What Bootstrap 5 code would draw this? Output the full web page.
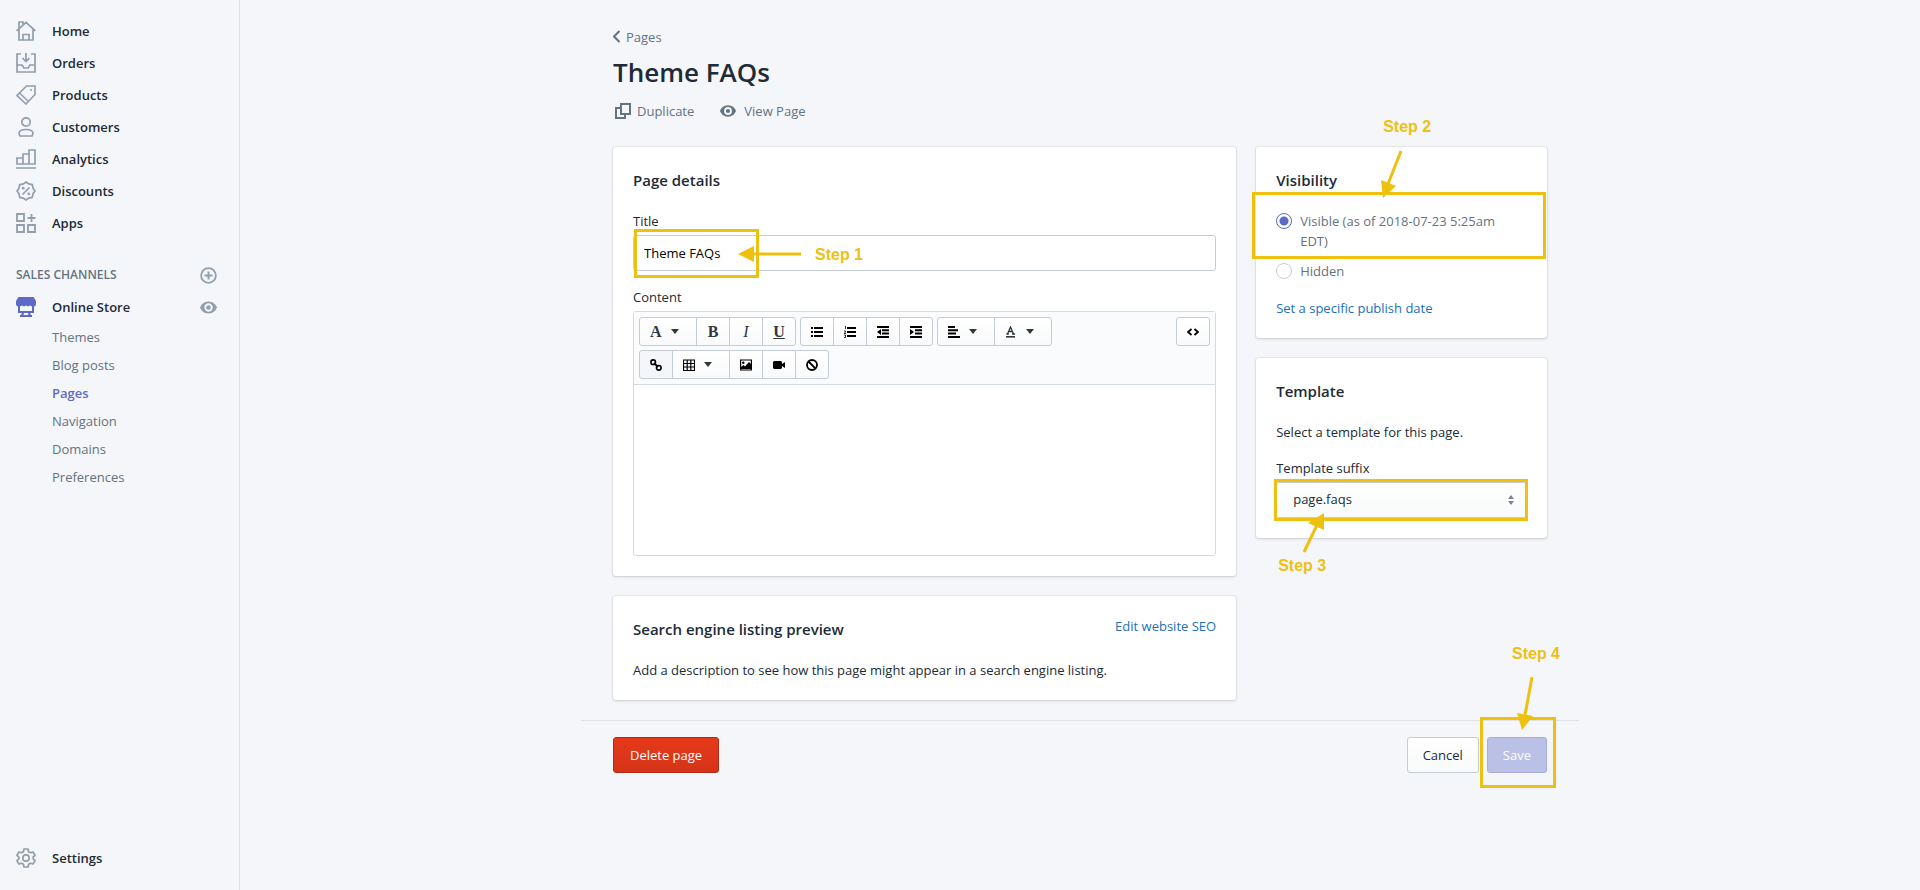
<!DOCTYPE html>
<html lang="en">
<head>
<meta charset="utf-8">
<meta name="viewport" content="width=device-width, initial-scale=1">
<title>Theme FAQs</title>
<link href="https://cdn.jsdelivr.net/npm/bootstrap@5.3.0/dist/css/bootstrap.min.css" rel="stylesheet">
<style>
  :root { --ink:#212b36; --subdued:#637381; --icon:#919eab; --indigo:#5c6ac4; --rule:#dfe3e8; --field:#c4cdd5; --gold:#eec00f; }
  body { background:#f4f6fa; color:var(--ink); font-family:"Open Sans","Noto Sans",sans-serif; font-size:13px; line-height:20px; }
  a { color:#1b70b8; text-decoration:none; }
  svg { fill:none; stroke:currentColor; display:block; flex:none; }
  .fill-icon { fill:currentColor; stroke:none; }

  .sidebar { width:240px; border-right:1px solid var(--rule); padding:15px 0 16px; }
  .sidebar .nav-link { display:flex; align-items:center; gap:16px; height:32px; padding:0 16px; color:var(--ink); font-weight:600; }
  .sidebar .nav-link svg { color:var(--icon); stroke-width:2; }
  .sidebar .nav-link .store { color:var(--indigo); }
  .channels { height:32px; padding:0 22px 0 16px; margin-top:20px; color:var(--subdued); font-size:12px; font-weight:600; }
  .plain-btn { background:none; border:0; padding:0; color:var(--icon); }
  .store-row { padding-right:22px; }
  .sidebar .sub-nav .nav-link { height:28px; padding-left:52px; color:var(--subdued); font-weight:400; }
  .sidebar .sub-nav .active { color:var(--indigo); font-weight:600; }

  .page { max-width:998px; padding:27px 0 0; }
  .page-body, .page-actions { padding-left:32px; padding-right:32px; }
  .crumb, .action-link { color:var(--subdued); }
  h1 { font-size:26px; line-height:32px; font-weight:600; margin:7px 0 0; }
  .title-actions { margin:13px 0 26px; gap:26px; }
  .columns { display:grid; grid-template-columns:minmax(0,15fr) minmax(0,7fr); gap:20px; }
  .stack { display:flex; flex-direction:column; gap:20px; }
  .panel { background:#fff; border-radius:3px; padding:20px; box-shadow:0 0 0 1px rgba(63,63,68,.06),0 1px 3px rgba(63,63,68,.18); }
  h2 { font-size:15px; line-height:24px; font-weight:600; margin:1px 0 -1px; }
  .form-label { margin:0; line-height:20px; }
  .form-control { height:36px; padding:0 10px; border-color:var(--field); border-radius:3px; font-size:13px; color:#000; }

  .editor { border:1px solid #d3dbe2; border-radius:3px; }
  .tools { background:#fafbfc; border-bottom:1px solid #d3dbe2; padding:5px; row-gap:4px; column-gap:4px; }
  .tools .btn { width:34px; height:29px; padding:0; display:flex; align-items:center; justify-content:center; flex:none; border:1px solid var(--field); border-radius:3px; background:linear-gradient(#fff,#f9fafb); color:#000; }
  .tools .btn.wide { width:58px; gap:9px; padding-left:10px; justify-content:flex-start; color:#31373d; }
  .tools .btn.pressed { background:#f4f6fa; }
  .glyph { font:700 16px/20px "Liberation Serif",serif; color:#31373d; }
  .canvas { display:block; width:100%; height:170px; border:0; resize:none; border-radius:3px; padding:10px; }

  .form-check { min-height:20px; padding-left:24px; margin:0; color:var(--subdued); }
  .form-check .form-check-input { width:16px; height:16px; margin:2px 0 0 -24px; border-color:var(--field); background-color:#fff; }
  .form-check .form-check-input:checked { border-color:var(--indigo); background-image:radial-gradient(circle,var(--indigo) 4px,transparent 5px); }
  .choice-next { margin-top:10px; }
  .publish { margin:17px 0 0; }
  .suffix { height:36px; padding:0 16px; border:1px solid var(--field); border-radius:3px; font-size:13px; color:var(--ink);
    background:url("data:image/svg+xml,%3Csvg xmlns='http://www.w3.org/2000/svg' viewBox='0 0 6 10'%3E%3Cpath fill='%23798490' d='M0 4l3-4 3 4zM0 6h6l-3 4z'/%3E%3C/svg%3E") no-repeat right 12px center/6px 10px, linear-gradient(#fff,#f9fafb); }

  .page-actions { border-top:1px solid var(--rule); margin-top:20px; padding-top:16px; }
  .page-actions .btn { height:36px; padding:0 15px; border-radius:3px; font-size:13px; line-height:20px; }
  .page-actions .btn-delete { color:#fff; background:linear-gradient(#e6391a,#d53418); border-color:#b02a12; padding:0 16px; }
  .btn-cancel { color:var(--ink); background:linear-gradient(#fff,#f9fafb); border-color:var(--field); }
  .page-actions .btn-save { color:#fff; background:#bac0e6; border-color:#a7aedc; opacity:1; }

  /* tutorial callouts laid over the form */
  .callout-box { position:absolute; border:3px solid var(--gold); pointer-events:none; z-index:2; }
  .callout-text { position:absolute; color:var(--gold); font:700 16px/20px "Liberation Sans",sans-serif; white-space:nowrap; z-index:3; }
  .callout-arrow { position:absolute; color:var(--gold); stroke-width:3; z-index:3; overflow:visible; }
  .callout-arrow polygon { fill:currentColor; stroke:none; }
  .step1 .callout-box { left:1px; top:-6px; width:125px; height:49px; }
  .step1 .callout-arrow { left:105px; top:11px; }
  .step1 .callout-text { left:182px; top:10px; }
  .step2 .callout-box { left:-24px; right:-19px; top:-15px; height:67px; }
  .step2 .callout-arrow { left:106px; top:-56px; }
  .step2 .callout-text { left:107px; top:-90px; }
  .step3 .callout-box { left:-2px; right:-1px; top:-3px; bottom:-3px; }
  .step3 .callout-arrow { left:24px; top:31px; }
  .step3 .callout-text { left:2px; top:74px; }
  .step4 .callout-box { left:-7px; right:-9px; top:-20px; bottom:-15px; }
  .step4 .callout-arrow { right:14px; top:-60px; }
  .step4 .callout-text { right:-13px; top:-93px; }
</style>
</head>
<body>
<div class="d-flex min-vh-100">
  <nav class="sidebar d-flex flex-column flex-shrink-0" aria-label="Main">
    <div class="nav flex-column">
      <a class="nav-link" href="#"><svg width="20" height="20" viewBox="0 0 20 20"><path d="M.6 9.800 10 1.400l9.400 8.400M3 8v11h14V8M3 7.500V1h4v2.500M7 19v-5.500h6V19" stroke-width="1.700"/></svg>Home</a>
      <a class="nav-link" href="#"><svg width="20" height="20" viewBox="0 0 20 20"><path d="M5 1H1v18h18V1h-4M10 0v8M6.500 5 10 8.500 13.500 5M1 12h5l2 3h4l2-3h5" stroke-width="1.700"/></svg>Orders</a>
      <a class="nav-link" href="#"><svg width="20" height="20" viewBox="0 0 20 20"><path d="M10.500 1H19v8.500L10 19 1 10.500zM3.500 8 12.500 16.500" stroke-width="1.600"/><circle cx="15" cy="5" r="1" fill="currentColor" stroke="none"/></svg>Products</a>
      <a class="nav-link" href="#"><svg width="20" height="20" viewBox="0 0 20 20"><circle cx="10" cy="5" r="4.200" stroke-width="1.700"/><path d="M3 16.500c0-2.500 3-4 7-4s7 1.500 7 4L16 19H4z" stroke-width="1.700"/></svg>Customers</a>
      <a class="nav-link" href="#"><svg width="20" height="20" viewBox="0 0 20 20"><path d="M1 15V9h6v6zM7 15V5h6v10zM13 15V1h6v14zM0 19h20" stroke-width="1.700"/></svg>Analytics</a>
      <a class="nav-link" href="#"><svg width="20" height="20" viewBox="0 0 20 20"><path d="M10 1l2.600 1.900 3.700.8.800 3.700L19 10l-1.900 2.600-.8 3.700-3.700.8L10 19l-2.600-1.900-3.700-.8-.8-3.700L1 10l1.900-2.600.8-3.700 3.700-.8zM6.500 13.500l7-7" stroke-width="1.700" stroke-linejoin="round"/><circle cx="7.200" cy="7.200" r="1.400" fill="currentColor" stroke="none"/><circle cx="12.800" cy="12.800" r="1.400" fill="currentColor" stroke="none"/></svg>Discounts</a>
      <a class="nav-link" href="#"><svg width="20" height="20" viewBox="0 0 20 20"><path d="M1 1h7v7H1zM1 12h7v7H1zM12 12h7v7h-7zM15.500 1v8M11.500 5h8" stroke-width="1.800"/></svg>Apps</a>
    </div>
    <div class="channels d-flex align-items-center justify-content-between">SALES CHANNELS
      <button class="plain-btn" type="button" aria-label="Add sales channel"><svg width="17" height="17" viewBox="0 0 17 17"><circle cx="8.500" cy="8.500" r="7.400" stroke-width="1.800"/><path d="M8.500 4.500v8M4.500 8.500h8" stroke-width="2"/></svg></button>
    </div>
    <div class="store-row d-flex align-items-center justify-content-between">
      <a class="nav-link" href="#"><svg class="store fill-icon" width="20" height="20" viewBox="0 0 20 20"><path fill-rule="evenodd" d="M2.500 0h15L20 4v3c0 1.500-1 2.500-2 2.500V16h-4l1 2h1v2H4v-2h1l1-2H2V9.500C1 9.500 0 8.500 0 7V4zM4 9.500V14h12V9.500l-2-1-2 1-2-1-2 1-2-1zM8 16l-.5 2h5L12 16z"/></svg>Online Store</a>
      <button class="plain-btn" type="button" aria-label="View your online store"><svg class="fill-icon" width="17" height="17" viewBox="0 0 17 17"><path fill-rule="evenodd" d="M8.500 2.500C4 2.500 1.200 5.500 0 8.500c1.200 3 4 6 8.500 6s7.300-3 8.500-6c-1.200-3-4-6-8.500-6zm0 1.800a4.200 4.200 0 1 1 0 8.400 4.200 4.200 0 0 1 0-8.400z"/><circle cx="8.500" cy="8.500" r="2.200"/></svg></button>
    </div>
    <div class="nav flex-column sub-nav">
      <a class="nav-link" href="#">Themes</a>
      <a class="nav-link" href="#">Blog posts</a>
      <a class="nav-link active" href="#" aria-current="page">Pages</a>
      <a class="nav-link" href="#">Navigation</a>
      <a class="nav-link" href="#">Domains</a>
      <a class="nav-link" href="#">Preferences</a>
    </div>
    <a class="nav-link mt-auto" href="#"><svg width="20" height="20" viewBox="0 0 20 20"><path d="M8 1h4l.6 2.700 1.900 1.100 2.600-.8 2 3.400L17.200 9v2l1.900 1.600-2 3.400-2.600-.8-1.900 1.100L12 19H8l-.6-2.700-1.900-1.100-2.600.8-2-3.400L2.800 11V9L.9 7.400l2-3.400 2.600.8 1.900-1.100z" stroke-width="1.700" stroke-linejoin="round"/><circle cx="10" cy="10" r="3.200" stroke-width="1.700"/></svg>Settings</a>
  </nav>

  <main class="flex-grow-1">
    <div class="page mx-auto">
      <div class="page-body">
        <a class="crumb d-inline-flex align-items-center" href="#"><svg class="me-1" width="9" height="14" viewBox="0 0 9 14"><path d="M6.500 1 1 6.500 6.500 12" stroke-width="2"/></svg>Pages</a>
        <h1>Theme FAQs</h1>
        <div class="title-actions d-flex">
          <a class="action-link d-flex align-items-center" href="#"><svg class="me-1" width="20" height="18" viewBox="0 0 20 18"><path d="M8 2h9v10H8zM8 6H3v10h9v-4" stroke-width="2"/></svg>Duplicate</a>
          <a class="action-link d-flex align-items-center" href="#"><svg class="fill-icon me-2" width="16" height="16" viewBox="0 0 17 17"><path fill-rule="evenodd" d="M8.500 2.500C4 2.500 1.200 5.500 0 8.500c1.200 3 4 6 8.500 6s7.300-3 8.500-6c-1.200-3-4-6-8.500-6zm0 1.800a4.200 4.200 0 1 1 0 8.400 4.200 4.200 0 0 1 0-8.400z"/><circle cx="8.500" cy="8.500" r="2.200"/></svg>View Page</a>
        </div>

        <div class="columns">
          <div class="stack">
            <section class="panel">
              <h2>Page details</h2>
              <div class="mt-3 pt-1 pb-1"><label class="form-label" for="title">Title</label></div>
              <div class="position-relative step1 mb-3">
                <input class="form-control" id="title" type="text" value="Theme FAQs">
                <div class="callout-box"></div>
                <svg class="callout-arrow" width="64" height="16" viewBox="0 0 64 16"><path d="M12 8h51"/><polygon points="0,8 16,0 16,16"/></svg>
                <span class="callout-text">Step 1</span>
              </div>
              <div class="pb-1"><label class="form-label" for="content">Content</label></div>
              <div class="editor">
                <div class="tools d-flex flex-wrap" role="toolbar" aria-label="Formatting">
                  <div class="btn-group">
                    <button class="btn wide" type="button" aria-label="Formatting"><span class="glyph">A</span><svg class="fill-icon" width="8" height="5" viewBox="0 0 8 5"><path d="M0 0h8L4 5z"/></svg></button>
                    <button class="btn" type="button" aria-label="Bold"><span class="glyph">B</span></button>
                    <button class="btn" type="button" aria-label="Italic"><span class="glyph fst-italic fw-normal">I</span></button>
                    <button class="btn" type="button" aria-label="Underline"><span class="glyph text-decoration-underline">U</span></button>
                  </div>
                  <div class="btn-group">
                    <button class="btn" type="button" aria-label="Bulleted list"><svg width="12" height="12" viewBox="0 0 12 12"><path d="M0 2h2M0 6h2M0 10h2M3 2h9M3 6h9M3 10h9" stroke-width="2"/></svg></button>
                    <button class="btn" type="button" aria-label="Numbered list"><svg width="12" height="12" viewBox="0 0 12 12"><path d="M3 2h9M3 6h9M3 10h9" stroke-width="2"/><path d="M1.500 0v3M0 5h1.500v1L0 7.500h2M0 9h1.500v2.500H0" stroke-width=".8"/></svg></button>
                    <button class="btn" type="button" aria-label="Outdent"><svg width="12" height="12" viewBox="0 0 12 12"><path d="M0 1h12M5 4.300h7M5 7.600h7M0 11h12" stroke-width="2"/><path d="M4 3v6L0 6z" class="fill-icon"/></svg></button>
                    <button class="btn" type="button" aria-label="Indent"><svg width="12" height="12" viewBox="0 0 12 12"><path d="M0 1h12M5 4.300h7M5 7.600h7M0 11h12" stroke-width="2"/><path d="M0 3v6l4-3z" class="fill-icon"/></svg></button>
                  </div>
                  <div class="btn-group">
                    <button class="btn wide" type="button" aria-label="Alignment"><svg class="text-black" width="12" height="12" viewBox="0 0 12 12"><path d="M0 1h7M0 4.300h10M0 7.600h8M0 11h12" stroke-width="2"/></svg><svg class="fill-icon" width="8" height="5" viewBox="0 0 8 5"><path d="M0 0h8L4 5z"/></svg></button>
                    <button class="btn wide" type="button" aria-label="Color"><svg width="12" height="12" viewBox="-1 0 12 12"><path d="M0 10.800h9" stroke-width="1.600"/><path d="M1.500 8 4.500 1l3 7M2.500 5.500h4M.3 8h2.500M6 8h3" stroke-width="1.300"/></svg><svg class="fill-icon" width="8" height="5" viewBox="0 0 8 5"><path d="M0 0h8L4 5z"/></svg></button>
                  </div>
                  <button class="btn ms-auto" type="button" aria-label="Show HTML"><svg width="12" height="8" viewBox="0 0 12 8"><path d="M4.500 1 1 4l3.500 3M7.500 1 11 4 7.500 7" stroke-width="1.800"/></svg></button>
                  <div class="w-100 d-flex">
                  <div class="btn-group">
                    <button class="btn pressed" type="button" aria-label="Link"><svg width="12" height="12" viewBox="0 0 12 12"><circle cx="3.200" cy="3.200" r="2.300" stroke-width="1.600"/><circle cx="8.800" cy="8.800" r="2.300" stroke-width="1.600"/><path d="M4 4l4 4" stroke-width="1.800"/></svg></button>
                    <button class="btn wide" type="button" aria-label="Table"><svg class="text-black" width="12" height="12" viewBox="0 0 12 12"><path d="M.5 1h11v10.500H.5zM.5 4.500h11M.5 8h11M4.200 1v10M7.800 1v10" stroke-width="1.200"/></svg><svg class="fill-icon" width="8" height="5" viewBox="0 0 8 5"><path d="M0 0h8L4 5z"/></svg></button>
                    <button class="btn" type="button" aria-label="Image"><svg width="12" height="12" viewBox="0 0 12 12"><path d="M.6 1h10.800v10H.6z" stroke-width="1.200"/><path class="fill-icon" d="M1 10V8l2.500-2L5 7.500 9 3l2.500 2.500V10z"/><circle class="fill-icon" cx="3.300" cy="3.800" r="1.200"/></svg></button>
                    <button class="btn" type="button" aria-label="Video"><svg class="fill-icon" width="12" height="10" viewBox="0 0 12 10"><path d="M1 1h7l1 1v2l3-2v6L9 6v2L8 9H1L0 8V2z"/></svg></button>
                    <button class="btn" type="button" aria-label="Clear formatting"><svg width="12" height="12" viewBox="0 0 12 12"><circle cx="6" cy="6" r="5" stroke-width="1.800"/><path d="M2.500 2.500l7 7" stroke-width="1.800"/></svg></button>
                  </div>
                  </div>
                </div>
                <textarea class="canvas" id="content"></textarea>
              </div>
            </section>
            <section class="panel">
              <div class="d-flex justify-content-between">
                <h2>Search engine listing preview</h2>
                <a href="#">Edit website SEO</a>
              </div>
              <p class="mb-0 mt-3 pt-1">Add a description to see how this page might appear in a search engine listing.</p>
            </section>
          </div>

          <div class="stack">
            <section class="panel">
              <h2>Visibility</h2>
              <div class="step2 position-relative mt-3 pt-1">
                <div class="form-check pe-4"><input class="form-check-input" type="radio" name="vis" id="visible" checked><label class="form-check-label" for="visible">Visible (as of 2018-07-23 5:25am EDT)</label></div>
                <div class="callout-box"></div>
                <svg class="callout-arrow" width="24" height="48" viewBox="0 0 24 48"><path d="M19 0 6 33"/><polygon points="1,47 -1,29 14,35"/></svg>
                <span class="callout-text">Step 2</span>
              </div>
              <div class="form-check choice-next"><input class="form-check-input" type="radio" name="vis" id="hidden"><label class="form-check-label" for="hidden">Hidden</label></div>
              <p class="publish"><a href="#">Set a specific publish date</a></p>
            </section>
            <section class="panel">
              <h2>Template</h2>
              <p class="mt-3 mb-3 pt-1">Select a template for this page.</p>
              <div class="pb-1"><label class="form-label" for="suffix">Template suffix</label></div>
              <div class="step3 position-relative">
                <select class="form-select suffix" id="suffix"><option>page.faqs</option></select>
                <div class="callout-box"></div>
                <svg class="callout-arrow" width="24" height="40" viewBox="0 0 24 40"><path d="M4 39 17 12"/><polygon points="24,0 8,10 24,17"/></svg>
                <span class="callout-text">Step 3</span>
              </div>
            </section>
          </div>
        </div>
      </div>

      <div class="page-actions d-flex gap-2">
        <button class="btn btn-delete me-auto" type="button">Delete page</button>
        <button class="btn btn-cancel" type="button">Cancel</button>
        <div class="step4 position-relative">
          <button class="btn btn-save" type="button" disabled>Save</button>
          <div class="callout-box"></div>
          <svg class="callout-arrow" width="16" height="54" viewBox="0 0 16 54"><path d="M15 0 8 38"/><polygon points="5,53 0,36 16,39"/></svg>
          <span class="callout-text">Step 4</span>
        </div>
      </div>
    </div>
  </main>
</div>
<script src="https://cdn.jsdelivr.net/npm/bootstrap@5.3.0/dist/js/bootstrap.bundle.min.js"></script>
</body>
</html>
